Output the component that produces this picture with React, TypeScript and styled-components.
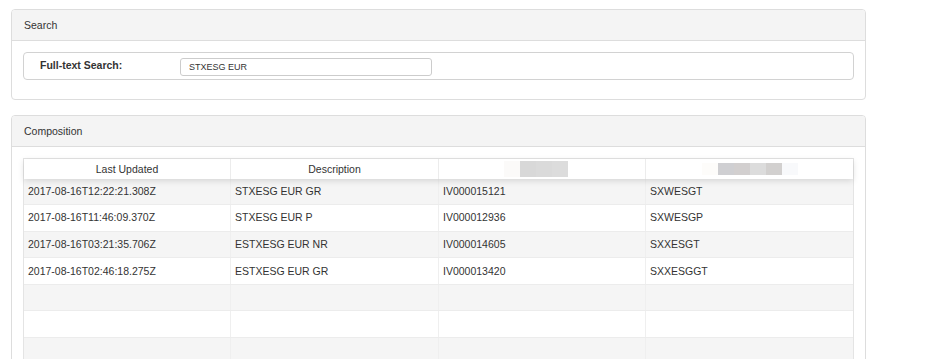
import React from "react";
import styled, { createGlobalStyle } from "styled-components";

const GlobalStyle = createGlobalStyle`
  html, body { margin: 0; padding: 0; background: #fff; }
  body {
    font-family: "Liberation Sans", Arial, sans-serif;
    font-size: 10.5px;
    color: #333;
  }
  * { box-sizing: border-box; }
`;

const Page = styled.div`
  padding: 9px 0 0 11px;
  width: 866px;
  display: flex;
  flex-direction: column;
  gap: 15px;
`;

const Panel = styled.section`
  border: 1px solid #ddd;
  border-radius: 4px;
  background: #fff;
  overflow: hidden;
`;

const PanelHeader = styled.div`
  height: 31px;
  line-height: 30px;
  padding-left: 12px;
  background: #f4f4f4;
  border-bottom: 1px solid #ddd;
  color: #333;
`;

const PanelBody = styled.div<{ $bottom?: number }>`
  padding: 11px 11px ${(p) => p.$bottom ?? 11}px 11px;
`;

const FieldBox = styled.div`
  height: 28px;
  border: 1px solid #d2d2d2;
  border-radius: 4px;
  display: flex;
  align-items: center;
  padding-left: 16px;
`;

const FieldLabel = styled.label`
  width: 140px;
  font-weight: bold;
  margin-top: -2px;
`;

const SearchInput = styled.input`
  width: 252px;
  height: 18px;
  border: 1px solid #ccc;
  border-radius: 3px;
  padding: 0 8px;
  font-family: "Liberation Sans", Arial, sans-serif;
  font-size: 9px;
  color: #333;
  outline: none;
  margin-top: 1px;
`;

const Table = styled.div`
  border: 1px solid #e4e4e4;
  border-bottom: none;
`;

const columns = "206fr 208fr 207fr 208fr";

const HeaderRow = styled.div`
  display: grid;
  grid-template-columns: ${columns};
  height: 19.5px;
  background: #fff;
  position: relative;
  z-index: 1;
  box-shadow: 0 2px 6px rgba(0, 0, 0, 0.13);
`;

const HeaderCell = styled.div`
  display: flex;
  align-items: center;
  justify-content: center;
  border-left: 1px solid #ececec;
  &:first-child { border-left: none; }
`;

const Redacted = styled.div<{ $h: number; $shift?: number }>`
  display: flex;
  height: ${(p) => p.$h}px;
  margin-left: ${(p) => p.$shift ?? 0}px;
`;

const Pixel = styled.span`
  width: 16px;
  height: 100%;
`;

const Row = styled.div<{ $odd: boolean }>`
  display: grid;
  grid-template-columns: ${columns};
  height: 26.6px;
  background: ${(p) => (p.$odd ? "#f5f5f5" : "#fff")};
  border-bottom: 1px solid #ececec;
`;

const Cell = styled.div`
  display: flex;
  align-items: center;
  padding-left: 4px;
  padding-bottom: 1px;
  white-space: nowrap;
  border-left: 1px solid #efefef;
  &:first-child { border-left: none; }
`;

const rows: string[][] = [
  ["2017-08-16T12:22:21.308Z", "STXESG EUR GR", "IV000015121", "SXWESGT"],
  ["2017-08-16T11:46:09.370Z", "STXESG EUR P", "IV000012936", "SXWESGP"],
  ["2017-08-16T03:21:35.706Z", "ESTXESG EUR NR", "IV000014605", "SXXESGT"],
  ["2017-08-16T02:46:18.275Z", "ESTXESG EUR GR", "IV000013420", "SXXESGGT"],
  ["", "", "", ""],
  ["", "", "", ""],
  ["", "", "", ""],
  ["", "", "", ""],
];

const col3 = ["#fbfaf9", "#d8d8d8", "#dadada", "#dcdcdc"];
const col4 = ["#fdfcfa", "#cfcfd2", "#d2cfcf", "#dcdcdc", "#d2d0cf", "#f8f9fb"];

export default function App() {
  return (
    <>
      <GlobalStyle />
      <Page>
        <Panel>
          <PanelHeader>Search</PanelHeader>
          <PanelBody $bottom={19}>
            <FieldBox>
              <FieldLabel>Full-text Search:</FieldLabel>
              <SearchInput defaultValue="STXESG EUR" />
            </FieldBox>
          </PanelBody>
        </Panel>
        <Panel>
          <PanelHeader>Composition</PanelHeader>
          <PanelBody>
            <Table>
              <HeaderRow>
                <HeaderCell>Last Updated</HeaderCell>
                <HeaderCell>Description</HeaderCell>
                <HeaderCell>
                  <Redacted $h={16} $shift={-13}>
                    {col3.map((c, i) => (
                      <Pixel key={i} style={{ background: c }} />
                    ))}
                  </Redacted>
                </HeaderCell>
                <HeaderCell>
                  <Redacted $h={12}>
                    {col4.map((c, i) => (
                      <Pixel key={i} style={{ background: c }} />
                    ))}
                  </Redacted>
                </HeaderCell>
              </HeaderRow>
              {rows.map((r, i) => (
                <Row key={i} $odd={i % 2 === 0}>
                  {r.map((v, j) => (
                    <Cell key={j}>{v}</Cell>
                  ))}
                </Row>
              ))}
            </Table>
          </PanelBody>
        </Panel>
      </Page>
    </>
  );
}
